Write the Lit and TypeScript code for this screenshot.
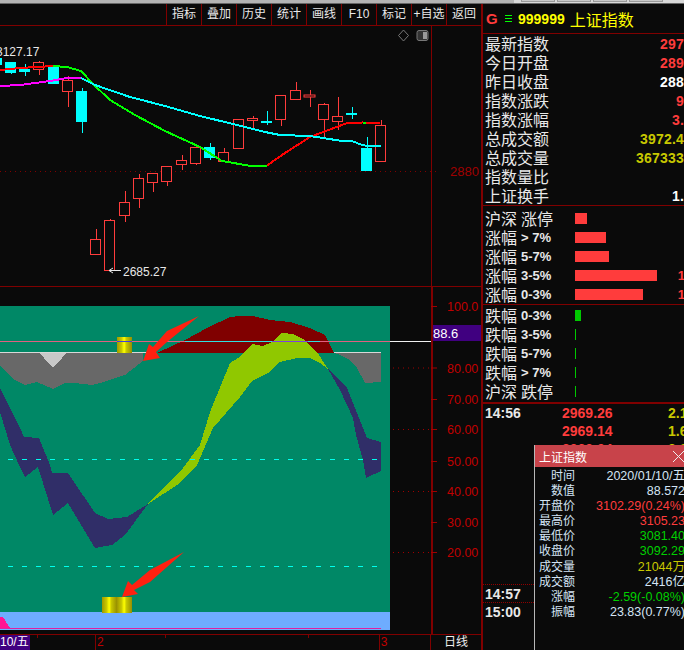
import { LitElement, html, css, svg } from "lit";
import { customElement } from "lit/decorators.js";

type C = [number, number, number, number, number, number, string];
const R = "#ff3c3c";
const B = "#00ffff";
// left, right, body top, body bottom, wick top, wick bottom, colour
const candles: C[] = [
  [-6, 2, 58, 65, 58, 65, B], [5, 16, 62, 73, 62, 74, B], [19, 30, 69, 72, 64, 76, B],
  [33.5, 43.5, 62.5, 69.5, 61, 75, R], [48, 59, 67, 84, 67, 84, B], [62.5, 72.5, 80.5, 91.5, 76, 107, R],
  [76, 87, 91, 122, 88, 133, B], [90.5, 100.5, 239.5, 254.5, 229, 255, R], [104.5, 114.5, 220.5, 270.5, 219, 271, R],
  [119.5, 129.5, 202.5, 215.5, 191, 222, R], [133.5, 143.5, 178.5, 198.5, 174, 208, R],
  [147.5, 157.5, 173.5, 182.5, 173, 192, R], [161.5, 171.5, 166.5, 181.5, 166, 186, R],
  [176.5, 186.5, 160.5, 164.5, 155, 170, R], [190.5, 200.5, 147.5, 163.5, 147, 165, R],
  [204, 215, 147, 158, 143, 160, B], [218.5, 228.5, 152.5, 161.5, 148, 162, R],
  [233.5, 243.5, 119.5, 148.5, 119, 149, R], [247.5, 257.5, 118.5, 120.5, 116, 128, R],
  [261, 272, 121, 123, 111, 125, B], [275.5, 285.5, 95.5, 119.5, 95, 126, R],
  [290.5, 300.5, 90.5, 99.5, 82, 100, R], [304, 315, 95, 97, 90, 107, R],
  [318.5, 328.5, 104.5, 119.5, 103, 137, R], [332.5, 342.5, 116.5, 121.5, 97, 130, R],
  [346, 357, 113, 115, 107, 119, B], [361, 372, 148, 171, 137, 171, B], [375.5, 385.5, 125.5, 161.5, 120, 162, R],
];

const lines: [string, string][] = [
  ["0,70 20,68 53,66", "#ff0000"],
  ["53,66 67,67 81,71 93,84 110,100 135,115 165,131 200,147 222,161 248,165.5 267,165.5", "#00ff00"],
  ["267,165.5 285,153 310,137 342,125 347,123 362,122.5 380,123", "#ff0000"],
  ["0,86 20,85 50,81 67,78 81,78", "#ff00ff"],
  ["81,78 95,85 130,97 165,106 200,116 233,124 265,132 280,135 310,136 342,141 352,141 362,145 368,146 381,146", "#00ffff"],
];

const axis: [string, number][] = [
  ["100.0", 306], ["80.00", 367.5], ["70.00", 399], ["60.00", 429], ["50.00", 461],
  ["40.00", 491], ["30.00", 522], ["20.00", 552],
];

const stats: [string, string, string][] = [
  ["最新指数", "297", "red"], ["今日开盘", "289", "red"], ["昨日收盘", "288", "white"],
  ["指数涨跌", "9", "red"], ["指数涨幅", "3.", "red"], ["总成交额", "3972.4", "yellow"],
  ["总成交量", "367333", "yellow"], ["指数量比", "", "white"], ["上证换手", "1.", "white"],
];
const ups: [string, string, number, string][] = [
  ["沪深", "涨停", 12, ""], ["涨幅", "> 7%", 31, ""], ["涨幅", "5-7%", 34, ""],
  ["涨幅", "3-5%", 82, "1"], ["涨幅", "0-3%", 68, "1"],
];
const downs: [string, string, number][] = [
  ["跌幅", "0-3%", 6], ["跌幅", "3-5%", 1], ["跌幅", "5-7%", 1], ["跌幅", "> 7%", 1], ["沪深", "跌停", 1],
];
const popup: [string, string, string][] = [
  ["时间", "2020/01/10/五", "pale"], ["数值", "88.572", "pale"], ["开盘价", "3102.29(0.24%)", "red"],
  ["最高价", "3105.23", "red"], ["最低价", "3081.40", "green"], ["收盘价", "3092.29", "green"],
  ["成交量", "21044万", "yellow"], ["成交额", "2416亿", "pale"], ["涨幅", "-2.59(-0.08%)", "green"],
  ["振幅", "23.83(0.77%)", "pale"],
];
const tools = ["指标", "叠加", "历史", "统计", "画线", "F10", "标记", "+自选", "返回"];

const isCjk = (s: string) => /[\u4e00-\u9fff]/.test(s);

const goldStops = svg`<linearGradient id="gold">
  <stop offset="0" stop-color="#a09800"/><stop offset=".3" stop-color="#c8c800"/>
  <stop offset=".48" stop-color="#ffff00"/><stop offset=".62" stop-color="#c8c800"/><stop offset="1" stop-color="#968e00"/>
</linearGradient>`;

@customElement("app-root")
export class AppRoot extends LitElement {
  static styles = css`
    :host { display: block; width: 684px; height: 650px; overflow: hidden; position: relative; background: #0a0a0a; color: #e8e8e8;
      font-family: "Liberation Sans", "Noto Sans CJK SC", sans-serif; }
    .strip { height: 4px; background: #b4b4b4; border-bottom: 1px solid #666; box-sizing: border-box; display: flex; justify-content: flex-end; }
    .tabs { width: 170px; height: 3px; background: #d8d8d8; display: flex; gap: 2px; padding-left: 7px; box-sizing: border-box; }
    .tab { width: 34px; height: 2px; background: #c8c8c8; border: solid #999; border-width: 0 1px 1px; box-sizing: border-box; }
    .main { display: grid; grid-template-columns: 481px 203px; height: 646px; }
    .left { display: flex; flex-direction: column; min-width: 0; }
    .toolbar { display: flex; justify-content: flex-end; border-bottom: 1px solid #800000; box-sizing: border-box; height: 22px; }
    .tool { width: 35px; box-sizing: border-box; border-left: 1px solid #800000; text-align: center; font-size: 12px; line-height: 21px; white-space: nowrap; overflow: hidden; }
    svg { display: block; }
    .price { border-bottom: 1px solid #800000; }
    .footer { height: 16px; box-sizing: border-box; display: flex; border-top: 1px solid #800000; font-size: 12px; line-height: 15px; white-space: nowrap; }
    .date { width: 30px; background: #400080; color: #fff; }
    .ticks { flex: 1; color: #c00000; display: flex;
      background-image: linear-gradient(#800000, #800000), linear-gradient(#800000, #800000), linear-gradient(#800000, #800000);
      background-size: 1px 3px; background-repeat: no-repeat; background-position: 7px 0, 135px 0, 278px 0; }
    .t2 { margin-left: 65px; border-left: 1px solid #800000; padding-left: 1px; }
    .t3 { margin-left: 275px; border-left: 1px solid #800000; padding-left: 1px; }
    .line { width: 50px; border-left: 1px solid #800000; text-align: center; color: #eee; }
    .panel { border-left: 2px solid #800000; display: flex; flex-direction: column; min-width: 0; overflow: hidden; }
    .head { height: 30px; box-sizing: border-box; border-bottom: 1px solid #800000; display: flex; align-items: center; padding-left: 3px; color: #ffff00; font-size: 16px; white-space: nowrap; }
    .g { color: #ff3c3c; font-weight: 700; width: 19px; font-size: 15px; }
    .eq { display: block; width: 7px; height: 7px; margin-right: 6px; background: repeating-linear-gradient(#00ff00 0 1px, transparent 1px 3px); }
    .code { font-weight: 700; font-size: 14px; margin-right: 5px; }
    .stats { border-bottom: 1px solid #800000; height: 172px; box-sizing: border-box; }
    .row { height: 19px; display: flex; align-items: center; justify-content: space-between; padding-left: 2px; font-size: 16px; white-space: nowrap; }
    .lift { padding-top: 2px; line-height: 17px; }
    .num { font-weight: 700; font-size: 14px; letter-spacing: .2px; }
    .red { color: #ff3c3c; } .white { color: #fff; } .yellow { color: #c8c800; } .green { color: #00d000; } .pale { color: #d4e4f4; }
    .dist { box-sizing: border-box; border-bottom: 1px solid #800000; }
    .ups { height: 99px; padding-top: 3px; }
    .downs { height: 99px; padding-top: 1px; border-bottom-width: 2px; }
    .bar-row { height: 19px; display: flex; align-items: center; padding-left: 2px; white-space: nowrap; position: relative; }
    .cjk { font-size: 16px; width: 36px; padding-top: 2px; line-height: 17px; }
    .range { font-size: 13px; font-weight: 700; width: 54px; }
    .range.word { font-size: 16px; font-weight: 400; padding-top: 2px; line-height: 17px; }
    .bar { height: 11px; background: #ff3c3c; }
    .bar.down { background: #00c800; }
    .end { position: absolute; right: -1px; font-size: 13px; color: #ff3c3c; font-weight: 700; }
    .time { display: grid; grid-template-columns: 77px 106px 1fr; height: 18px; align-items: center; padding-left: 2px; font-weight: 700; font-size: 14px; white-space: nowrap; }
    .first { margin-top: 126px; }
    .dot { border-top: 1px dotted #900000; box-sizing: border-box; }
    .popup { position: absolute; left: 534px; top: 445px; width: 150px; height: 205px; background: #0a0a0a; border-left: 1px solid #b8b8b8; box-sizing: border-box; font-size: 12.5px; overflow: hidden; }
    .ptitle { height: 22px; background: #c8434a; color: #fff; display: flex; justify-content: space-between; align-items: center; padding-left: 4px; font-size: 12px; }
    .plist { padding-top: 2px; }
    .prow { height: 15.1px; display: grid; grid-template-columns: 40px 1fr; line-height: 15px; white-space: nowrap; }
    .plabel { color: #d4e4f4; text-align: right; font-size: 12px; }
    .pval { text-align: right; margin-right: -1px; }
  `;

  priceChart() {
    return html`<svg class="price" width="481" height="260" viewBox="0 26 481 260" font-family="Liberation Sans">
      <line x1="0" x2="437" y1="171.5" y2="171.5" stroke="#800000" stroke-dasharray="1 4"/>
      <line x1="431.5" x2="431.5" y1="26" y2="286" stroke="#800000"/>
      <text x="450" y="176" font-size="13" fill="#a00000">2880</text>
      ${candles.map(([l, r, t, b, wt, wb, c]) => {
        const mx = Math.round((l + r) / 2) + 0.5;
        const wick = svg`<line x1=${mx} x2=${mx} y1=${wt} y2=${wb} stroke=${c}/>`;
        return c === B
          ? svg`${wick}<rect x=${l} y=${t} width=${r - l} height=${b - t} fill=${c}/>`
          : svg`${wick}<rect x=${l} y=${t} width=${r - l} height=${b - t} fill="#0a0a0a" stroke=${c}/>`;
      })}
      ${lines.map(([p, c]) => svg`<polyline points=${p} fill="none" stroke=${c} stroke-width="2" shape-rendering="crispEdges"/>`)}
      <line x1="363" x2="366" y1="123" y2="123" stroke="#00ff00" stroke-width="2"/>
      <text x="-4" y="56" font-size="12" fill="#e8e8e8">3127.17</text>
      <path d="M121 270.5H109M113 268l-4 2.5 4 2.5" fill="none" stroke="#e8e8e8"/>
      <text x="123" y="275.5" font-size="12" fill="#e8e8e8">2685.27</text>
      <path d="M403.5 30l5 5.5-5 5.5-5-5.5z" fill="none" stroke="#777"/>
      <rect x="417" y="30.5" width="11" height="10" rx="2" fill="#333" stroke="#777"/>
      <rect x="423" y="32" width="4" height="7" fill="#999"/>
    </svg>`;
  }

  indicator() {
    return html`<svg width="481" height="347" viewBox="0 287 481 347" font-family="Liberation Sans">
      <defs>${goldStops}</defs>
      <g shape-rendering="crispEdges">
      <rect x="0" y="306" width="390" height="324" fill="#008866"/>
      <rect x="0" y="612" width="390" height="18" fill="#6eacff"/>
      <rect x="0" y="628" width="381" height="1" fill="#e020a0"/>
      <polygon points="0,617 3,617 10,628 0,628" fill="#ff1493"/>
      <polygon points="158,352.5 185,340 207,328 230,317 240,316 253,316 270,320 290,322 300,325 310,328 325,335 334,352.5" fill="#800000"/>
      <polygon points="0,352.5 143,352.5 143,361 125,375 100,383 92,385 75,383 65,383 53,389 37,382 25,385 13,379 0,366" fill="#686868"/>
      <polygon points="39,352.5 67,352.5 53,368" fill="#c8c8c8"/>
      <polygon points="334,352.5 381,352.5 381,382 365,383 357,368 350,360 340,355" fill="#686868"/>
      <rect x="0" y="352" width="155" height="1" fill="#d8d8d8"/>
      <rect x="334" y="352" width="47" height="1" fill="#d8d8d8"/>
      <polygon points="148,504 183,468 200,445 210,412 230,363 240,357 252,344 263,346 272,342 282,333 293,334 303,339 317,352 328,369 320,363 310,358 297,358 280,362 268,373 252,381 240,397 213,428 197,465 180,483" fill="#90c800"/>
      <polygon points="0,388 20,428 24,437 39,438 50,465 52,473 68,473 95,513 108,519 127,517 148,504 125,535 112,545 95,548 68,503 53,515 38,467 25,477 19,465 10,445 0,412" fill="#302e68"/>
      <polygon points="328,369 347,388 359,418 367,438 381,442 381,471 366,478 363,460 356,435 353,418 340,390" fill="#302e68"/>
      </g>
      <line x1="8" x2="383" y1="459.5" y2="459.5" stroke="#00ffee" stroke-dasharray="5 9"/>
      <line x1="8" x2="383" y1="566.5" y2="566.5" stroke="#00ffee" stroke-dasharray="5 9"/>
      <rect x="117" y="337" width="15" height="16" fill="url(#gold)"/>
      <rect x="102" y="597" width="15" height="16" fill="url(#gold)"/>
      <rect x="117" y="597" width="15" height="16" fill="url(#gold)"/>
      <rect x="0" y="341" width="185" height="1" fill="#e06080"/>
      <rect x="117" y="341" width="15" height="1" fill="#4040e0"/>
      <rect x="185" y="341" width="135" height="1" fill="#30e0e0"/>
      <rect x="272" y="341" width="36" height="1" fill="#8040e0"/>
      <rect x="320" y="341" width="70" height="1" fill="#e06080"/>
      <rect x="390" y="341" width="41" height="1" fill="#f0f0f0"/>
      <polygon points="199,316 167,342 156,352 160,358 143,361 149,344 153,347 167,331" fill="#ff2010"/>
      <polygon points="184,552 150,582 134,590 138,594 122,597 128,581 132,585 150,570" fill="#ff2010"/>
      <rect x="431" y="287" width="2" height="347" fill="#800000"/>
      ${axis.map(([t, y]) => svg`<text x="447" y=${y + 5} font-size="12.5" fill="#c00000">${t}</text>
        <line x1="431" x2="437" y1=${y + 0.5} y2=${y + 0.5} stroke="#a00000"/>`)}
      ${[367.5, 429, 491, 552].map((y) => svg`<line x1="393" x2="431" y1=${y + 0.5} y2=${y + 0.5} stroke="#a00000" stroke-dasharray="1 4"/>`)}
      <rect x="433" y="325" width="48" height="16" fill="#400080"/>
      <text x="433" y="338" font-size="13" fill="#fff">88.6</text>
    </svg>`;
  }

  render() {
    return html`
      <div class="strip"><div class="tabs">${[0, 1, 2, 3].map(() => html`<div class="tab"></div>`)}</div></div>
      <div class="main">
        <div class="left">
          <div class="toolbar">${tools.map((t) => html`<div class="tool">${t}</div>`)}</div>
          ${this.priceChart()}
          ${this.indicator()}
          <div class="footer">
            <div class="date">10/五</div>
            <div class="ticks"><span class="t2">2</span><span class="t3">3</span></div>
            <div class="line">日线</div>
          </div>
        </div>
        <div class="panel">
          <div class="head"><span class="g">G</span><span class="eq"></span><span class="code">999999</span>上证指数</div>
          <div class="stats">
            ${stats.map(([l, v, c]) => html`<div class="row"><span class="lift">${l}</span><span class="num ${c}">${v}</span></div>`)}
          </div>
          <div class="dist ups">
            ${ups.map(([a, b, w, e]) => html`<div class="bar-row"><span class="cjk">${a}</span><span class="range ${isCjk(b) ? "word" : ""}">${b}</span>
              <div class="bar" style="width:${w}px"></div>${e ? html`<span class="end">${e}</span>` : ""}</div>`)}
          </div>
          <div class="dist downs">
            ${downs.map(([a, b, w]) => html`<div class="bar-row"><span class="cjk">${a}</span><span class="range ${isCjk(b) ? "word" : ""}">${b}</span>
              <div class="bar down" style="width:${w}px"></div></div>`)}
          </div>
          <div class="time"><span>14:56</span><span class="red">2969.26</span><span class="yellow">2.1</span></div>
          <div class="time"><span></span><span class="red">2969.14</span><span class="yellow">1.6</span></div>
          <div class="time"><span></span><span class="red">2969.04</span><span class="yellow">2.0</span></div>
          <div class="time first dot"><span>14:57</span></div>
          <div class="time dot"><span>15:00</span></div>
        </div>
      </div>
      <div class="popup">
        <div class="ptitle"><span>上证指数</span>
          <svg width="14" height="14" viewBox="0 0 14 14"><path d="M3 2l11 11M14 2L3 13" stroke="#eee" fill="none"/></svg></div>
        <div class="plist">
          ${popup.map(([l, v, c]) => html`<div class="prow"><span class="plabel">${l}</span><span class="pval ${c}">${v}</span></div>`)}
        </div>
      </div>
    `;
  }
}
